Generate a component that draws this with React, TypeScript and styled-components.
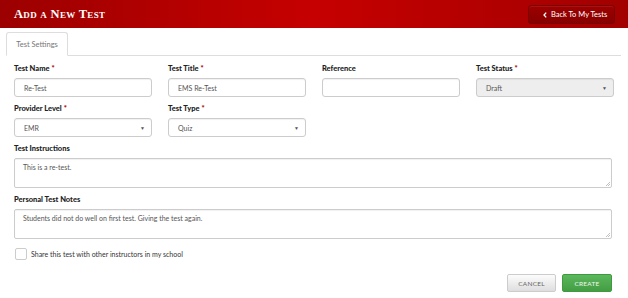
import React from "react";
import styled, { createGlobalStyle } from "styled-components";

const Global = createGlobalStyle`
  html, body { margin: 0; padding: 0; background: #fff; }
  body { font-family: Lato, "Open Sans", sans-serif; color: #333; }
  * { box-sizing: border-box; }
`;

const Page = styled.div`
  width: 628px;
  height: 298px;
  background: #fff;
  overflow: hidden;
`;

const Header = styled.header`
  height: 28px;
  display: flex;
  align-items: center;
  justify-content: space-between;
  padding: 0 13px 0 14px;
  background: linear-gradient(90deg, #9c0000 0%, #c60000 50%, #a20000 100%);
`;

const Title = styled.h1`
  margin: 0;
  font-family: "Liberation Serif", "DejaVu Serif", serif;
  font-variant: small-caps;
  font-weight: bold;
  font-size: 12.5px;
  letter-spacing: 0.3px;
  color: #fff;
`;

const BackButton = styled.button`
  display: flex;
  align-items: center;
  gap: 4px;
  height: 19px;
  width: 87px;
  margin-top: 1px;
  padding: 0 0 0 14px;
  border: 1px solid #7d0000;
  border-radius: 3px;
  background: linear-gradient(180deg, #9e0000, #870000);
  color: #fff;
  font-family: Lato, sans-serif;
  font-size: 7.5px;
  box-shadow: inset 0 1px 0 rgba(255, 255, 255, 0.08);
`;

const Body = styled.div`
  padding: 4px 7px 0 6px;
`;

const TabBar = styled.div`
  display: flex;
  border-bottom: 1px solid #ddd;
  height: 24px;
`;

const Tab = styled.div`
  height: 24px;
  width: 62px;
  margin-bottom: -1px;
  display: flex;
  align-items: center;
  justify-content: center;
  border: 1px solid #ddd;
  border-bottom-color: #fff;
  border-radius: 3px 3px 0 0;
  background: #fff;
  font-size: 7.5px;
  color: #777;
`;

const Form = styled.div`
  padding: 8px 9px 0 8px;
  display: flex;
  flex-direction: column;
`;

const Grid = styled.div`
  display: grid;
  grid-template-columns: repeat(4, 138px);
  column-gap: 16px;
  row-gap: 7px;
`;

const Field = styled.div`
  display: flex;
  flex-direction: column;
`;

const Label = styled.label`
  font-size: 7.5px;
  font-weight: 900;
  color: #222;
  height: 9px;
  line-height: 9px;
  margin-bottom: 5px;
`;

const Req = styled.span`
  color: #a00;
  margin-left: 2px;
`;

const Input = styled.div<{ $disabled?: boolean }>`
  height: 19px;
  border: 1px solid #ccc;
  border-radius: 3px;
  background: ${(p) => (p.$disabled ? "#eee" : "#fff")};
  box-shadow: inset 0 1px 1px rgba(0, 0, 0, 0.06);
  display: flex;
  align-items: center;
  justify-content: space-between;
  padding: 0 6px 0 9px;
  font-size: 7px;
  color: #555;
`;

const Caret = styled.span`
  font-size: 5px;
  color: #555;
`;

const Wide = styled(Field)`
  margin-top: 7px;
`;

const TextArea = styled.div`
  position: relative;
  height: 30px;
  border: 1px solid #ccc;
  border-radius: 2px;
  box-shadow: inset 0 1px 1px rgba(0, 0, 0, 0.06);
  padding: 4px 8px;
  font-size: 7px;
  color: #555;
`;

const Grip = styled.svg`
  position: absolute;
  right: 1px;
  bottom: 1px;
`;

const CheckRow = styled.div`
  display: flex;
  align-items: center;
  gap: 4px;
  margin-top: 9px;
  margin-left: 1px;
  font-size: 7px;
  color: #333;
`;

const Box = styled.span`
  width: 12px;
  height: 12px;
  border: 1px solid #ccc;
  border-radius: 2px;
  background: #fff;
`;

const Actions = styled.div`
  display: flex;
  justify-content: flex-end;
  gap: 6px;
  margin-top: 14px;
`;

const Btn = styled.button<{ $primary?: boolean }>`
  height: 18px;
  width: ${(p) => (p.$primary ? "50px" : "49px")};
  border-radius: 2px;
  border: 1px solid ${(p) => (p.$primary ? "#3f9a3f" : "#ccc")};
  background: ${(p) =>
    p.$primary
      ? "linear-gradient(180deg, #5cb85c, #449d44)"
      : "linear-gradient(180deg, #fcfcfc, #dedede)"};
  color: ${(p) => (p.$primary ? "#eef8ee" : "#666")};
  font-family: Lato, sans-serif;
  font-size: 6.5px;
  letter-spacing: 0.2px;
  padding: 0;
`;

const ResizeGrip = () => (
  <Grip width="5" height="5" viewBox="0 0 5 5">
    <path d="M5 1L1 5M5 3L3 5" stroke="#999" strokeWidth="0.6" />
  </Grip>
);

export default function App() {
  return (
    <Page>
      <Global />
      <Header>
        <Title>Add a New Test</Title>
        <BackButton>
          <svg width="4" height="6" viewBox="0 0 4 6">
            <path d="M3.2 0.6L1 3l2.2 2.4" stroke="#fff" strokeWidth="1.3" fill="none" />
          </svg>
          Back To My Tests
        </BackButton>
      </Header>
      <Body>
        <TabBar>
          <Tab>Test Settings</Tab>
        </TabBar>
        <Form>
          <Grid>
            <Field>
              <Label>Test Name<Req>*</Req></Label>
              <Input>Re-Test</Input>
            </Field>
            <Field>
              <Label>Test Title<Req>*</Req></Label>
              <Input>EMS Re-Test</Input>
            </Field>
            <Field>
              <Label>Reference</Label>
              <Input />
            </Field>
            <Field>
              <Label>Test Status<Req>*</Req></Label>
              <Input $disabled>
                Draft<Caret>▼</Caret>
              </Input>
            </Field>
            <Field>
              <Label>Provider Level<Req>*</Req></Label>
              <Input>
                EMR<Caret>▼</Caret>
              </Input>
            </Field>
            <Field>
              <Label>Test Type<Req>*</Req></Label>
              <Input>
                Quiz<Caret>▼</Caret>
              </Input>
            </Field>
          </Grid>
          <Wide>
            <Label>Test Instructions</Label>
            <TextArea>
              This is a re-test.
              <ResizeGrip />
            </TextArea>
          </Wide>
          <Wide>
            <Label>Personal Test Notes</Label>
            <TextArea>
              Students did not do well on first test. Giving the test again.
              <ResizeGrip />
            </TextArea>
          </Wide>
          <CheckRow>
            <Box />
            Share this test with other instructors in my school
          </CheckRow>
          <Actions>
            <Btn>CANCEL</Btn>
            <Btn $primary>CREATE</Btn>
          </Actions>
        </Form>
      </Body>
    </Page>
  );
}
